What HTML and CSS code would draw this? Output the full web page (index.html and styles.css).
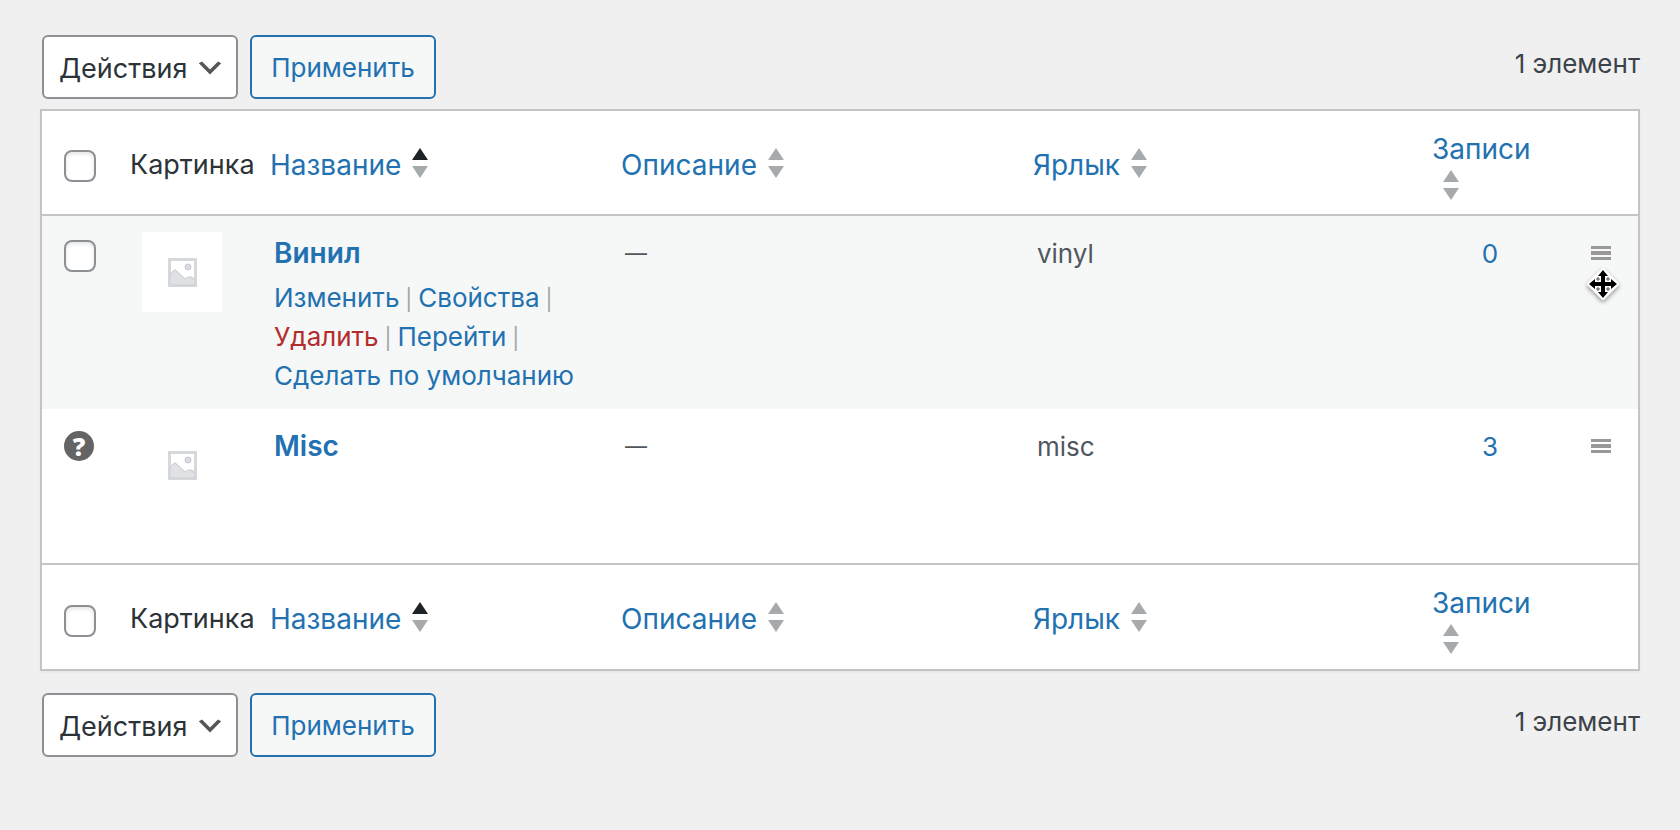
FILE: index.html
```html
<!DOCTYPE html>
<html lang="ru">
<head>
<meta charset="utf-8">
<meta name="viewport" content="width=device-width, initial-scale=1">
<title>Рубрики</title>
<link rel="stylesheet" href="styles.css">
</head>
<body>

<svg class="symbols" width="0" height="0">
  <symbol id="sort" viewBox="0 0 16 30">
    <path class="up" d="M8 0l8 12H0z"/>
    <path class="down" d="M0 18h16L8 30z"/>
  </symbol>
  <symbol id="picture" viewBox="0 0 29 29">
    <path fill="#d6d9dc" fill-rule="evenodd" d="M0 0h29v29H0zM3 3v13l4-5 11 10 5-3 3 2V3z"/>
    <path fill="#dfe1e4" stroke="#cdd1d4" d="M2 17l2-3 3-2 10 9c3-3 5-2 6-1l4 2v5H2z"/>
    <circle cx="20" cy="9" r="3" fill="#d9dce0" stroke="#c6cace"/>
  </symbol>
  <symbol id="bars" viewBox="0 0 20 14">
    <path fill="#999" d="M0 0h20v3H0zM0 5h20v4H0zM0 11h20v3H0z"/>
  </symbol>
</svg>

<form class="wrap">
  <div class="tablenav top">
    <div class="bulkactions">
      <select class="action" aria-label="Действия"><option>Действия</option></select>
      <button type="button" class="button">Применить</button>
    </div>
    <span class="count">1 элемент</span>
  </div>

  <table class="list-table">
    <thead>
      <tr>
        <th class="check"><input type="checkbox" aria-label="Выделить все"></th>
        <th class="thumb">Картинка</th>
        <th class="name"><a href="#" class="sorted">Название<svg class="sort"><use href="#sort"/></svg></a></th>
        <th class="description"><a href="#">Описание<svg class="sort"><use href="#sort"/></svg></a></th>
        <th class="slug"><a href="#">Ярлык<svg class="sort"><use href="#sort"/></svg></a></th>
        <th class="posts"><a href="#">Записи<svg class="sort"><use href="#sort"/></svg></a></th>
        <th class="handle"></th>
      </tr>
    </thead>
    <tbody>
      <tr class="alternate">
        <td class="check"><input type="checkbox" aria-label="Выбрать Винил"></td>
        <td class="thumb"><span class="placeholder"><svg width="29" height="29"><use href="#picture"/></svg></span></td>
        <td class="name">
          <a href="#" class="row-title">Винил</a>
          <div class="row-actions">
            <a href="#">Изменить</a><span class="sep"> | </span><a href="#">Свойства</a><span class="sep"> | </span><a href="#" class="delete">Удалить</a><span class="sep"> | </span><a href="#">Перейти</a><span class="sep"> | </span><a href="#">Сделать по умолчанию</a>
          </div>
        </td>
        <td class="description">—</td>
        <td class="slug">vinyl</td>
        <td class="posts"><a href="#">0</a></td>
        <td class="handle">
          <svg class="bars"><use href="#bars"/></svg>
          <svg class="cursor" viewBox="0 0 36 36">
            <path fill="#fff" stroke="#fff" stroke-width="4" stroke-linejoin="round" d="M18 4L32 18 18 32 4 18z"/>
            <path d="M18 4l5 6h-3v6h6v-3l6 5-6 5v-3h-6v6h3l-5 6-5-6h3v-6h-6v3l-6-5 6-5v3h6v-6h-3z"/>
            <path fill="none" stroke="#555" d="M12 12h2v2h-2zM22 12h2v2h-2zM12 22h2v2h-2zM22 22h2v2h-2z"/>
          </svg>
        </td>
      </tr>
      <tr>
        <td class="check"><span class="help">?</span></td>
        <td class="thumb"><span class="placeholder"><svg width="29" height="29"><use href="#picture"/></svg></span></td>
        <td class="name"><a href="#" class="row-title">Misc</a></td>
        <td class="description">—</td>
        <td class="slug">misc</td>
        <td class="posts"><a href="#">3</a></td>
        <td class="handle"><svg class="bars"><use href="#bars"/></svg></td>
      </tr>
    </tbody>
    <tfoot>
      <tr>
        <th class="check"><input type="checkbox" aria-label="Выделить все"></th>
        <th class="thumb">Картинка</th>
        <th class="name"><a href="#" class="sorted">Название<svg class="sort"><use href="#sort"/></svg></a></th>
        <th class="description"><a href="#">Описание<svg class="sort"><use href="#sort"/></svg></a></th>
        <th class="slug"><a href="#">Ярлык<svg class="sort"><use href="#sort"/></svg></a></th>
        <th class="posts"><a href="#">Записи<svg class="sort"><use href="#sort"/></svg></a></th>
        <th class="handle"></th>
      </tr>
    </tfoot>
  </table>

  <div class="tablenav bottom">
    <div class="bulkactions">
      <select class="action" aria-label="Действия"><option>Действия</option></select>
      <button type="button" class="button">Применить</button>
    </div>
    <span class="count">1 элемент</span>
  </div>
</form>

</body>
</html>
```

FILE: styles.css
```css
body {
  margin: 0;
  background: #f0f0f0;
  color: #3c434a;
  font-family: Inter, "Liberation Sans", sans-serif;
  font-size: 26px;
  line-height: 39px;
}

*, *:before, *:after {
  box-sizing: border-box;
}

a {
  color: #2271b1;
  text-decoration: none;
}

.symbols {
  position: absolute;
}

.wrap {
  padding: 35px 40px;
}

.tablenav {
  display: flex;
  justify-content: space-between;
  align-items: flex-start;
}

.tablenav.top {
  margin-bottom: 10px;
}

.tablenav.bottom {
  margin-top: 22px;
}

.bulkactions {
  display: flex;
  gap: 12px;
  padding-left: 2px;
}

.action,
.button {
  height: 64px;
  border-radius: 6px;
  font-family: inherit;
}

.action {
  appearance: none;
  width: 196px;
  padding: 2px 46px 0 15px;
  border: 2px solid #8c8f94;
  background: #fff url("data:image/svg+xml,%3Csvg xmlns='http://www.w3.org/2000/svg' viewBox='0 0 20 20'%3E%3Cpath d='M5 6l5 5 5-5 2 1-7 7-7-7 2-1z' fill='%23555'/%3E%3C/svg%3E") no-repeat right 10px top 15px;
  background-size: 32px 32px;
  color: #2c3338;
  font-size: 27px;
}

.button {
  width: 186px;
  padding: 0;
  border: 2px solid #2271b1;
  background: #f6f7f7;
  color: #2271b1;
  font-size: 26px;
}

.count {
  padding-top: 9px;
}

.list-table {
  width: 100%;
  table-layout: fixed;
  border-spacing: 0;
  border: 2px solid #c3c4c7;
  background: #fff;
  box-shadow: 0 2px 2px rgba(0, 0, 0, 0.04);
}

th {
  padding: 4px 0 0 16px;
  color: #2c3338;
  font-size: 27px;
  font-weight: 400;
  line-height: 36px;
  text-align: left;
  white-space: nowrap;
}

thead th {
  border-bottom: 2px solid #c3c4c7;
}

tfoot th {
  border-top: 2px solid #c3c4c7;
}

td {
  padding: 18px 20px 14px;
  color: #50575e;
  vertical-align: top;
}

tbody tr {
  height: 154px;
}

.alternate {
  background: #f6f7f7;
}

.check {
  width: 72px;
  padding-left: 22px;
}

.thumb {
  width: 140px;
}

.name {
  width: 22%;
}

.description {
  width: 25.8%;
}

.posts {
  width: 146px;
}

.handle {
  width: 75px;
}

th a {
  display: flex;
  flex-wrap: wrap;
  align-items: center;
  row-gap: 2px;
  font-size: 28px;
}

th.posts {
  padding: 20px 15px 9px;
}

tfoot th.posts {
  padding-bottom: 10px;
}

.sort {
  width: 16px;
  height: 30px;
  margin: 1px 11px 5px;
  fill: #a7aaad;
}

.sorted .sort {
  --up: #1d2327;
}

.up {
  fill: var(--up, #a7aaad);
}

input[type="checkbox"] {
  appearance: none;
  display: block;
  width: 32px;
  height: 32px;
  margin: 3px 0 0;
  border: 2px solid #8c8f94;
  border-radius: 8px;
  background: #fff;
  box-shadow: inset 0 2px 4px rgba(0, 0, 0, 0.1);
}

td.check {
  padding: 22px 0 0 22px;
}

td.check input {
  margin: 2px 0 0;
}

.help {
  display: block;
  width: 30px;
  height: 30px;
  border-radius: 50%;
  background: #646464;
  color: #fff;
  font-family: "Open Sans", sans-serif;
  font-size: 25px;
  font-weight: 800;
  line-height: 30px;
  text-align: center;
}

td.thumb {
  padding: 16px 0 0 28px;
}

.placeholder {
  display: flex;
  justify-content: center;
  align-items: center;
  width: 80px;
  height: 80px;
  background: #fff;
}

td.name {
  padding-right: 0;
}

td.description {
  font-size: 22px;
}

.row-title {
  display: block;
  font-size: 28px;
  font-weight: 600;
}

.row-actions {
  padding-top: 5px;
}

.sep {
  color: #a0a3a6;
  font-size: 21px;
  line-height: 1;
}

.delete {
  color: #b32d2e;
}

td.posts {
  text-align: center;
}

td.handle {
  position: relative;
  padding: 30px 0 0 28px;
}

.bars {
  display: block;
  width: 20px;
  height: 14px;
}

/* drag pointer over the row */
.cursor {
  position: absolute;
  top: 50px;
  left: 22px;
  width: 36px;
  height: 36px;
  filter: drop-shadow(0 2px 2px rgba(0, 0, 0, 0.4));
}
```
